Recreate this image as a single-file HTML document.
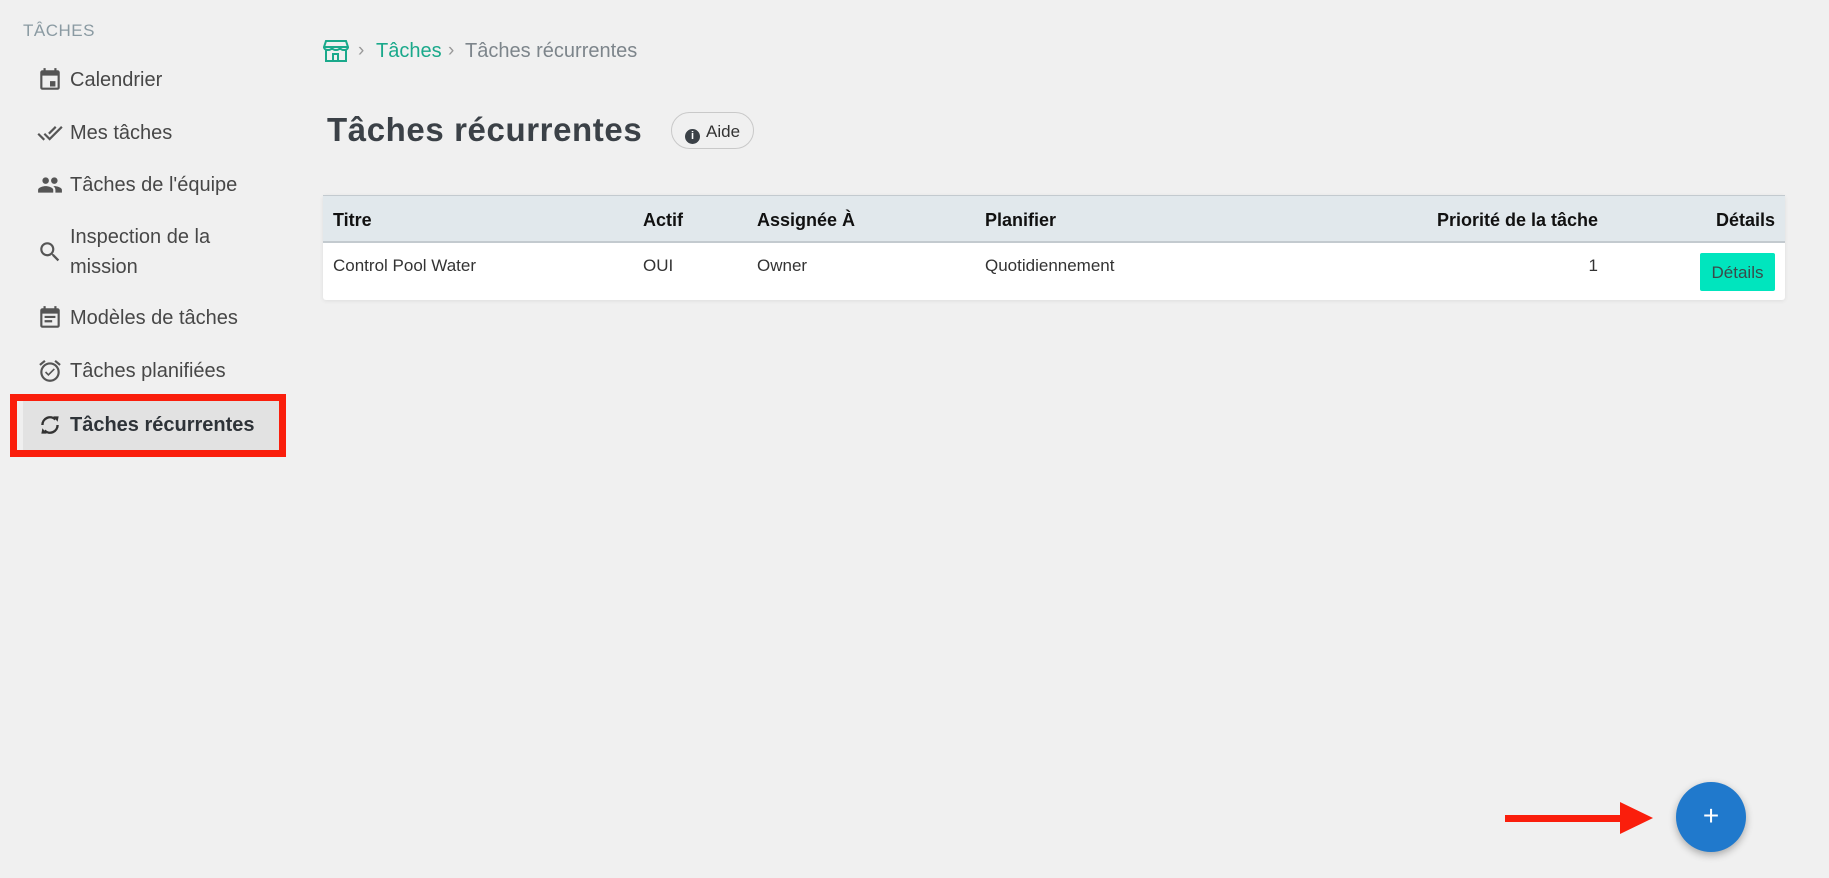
<!DOCTYPE html>
<html><head><meta charset="utf-8"><style>
*{box-sizing:border-box;margin:0;padding:0}
body{width:1829px;height:878px;background:#f0f0f0;font-family:"Liberation Sans",sans-serif;position:relative;overflow:hidden;color:#444}
.abs{position:absolute}
.sec{left:23px;top:21px;font-size:17px;color:#8a9aa2;letter-spacing:.5px}
.it{left:70px;font-size:20px;color:#474747;line-height:30px}
.ic{position:absolute;left:37px}
</style></head><body>
<div class="abs sec">TÂCHES</div>

<svg class="ic" style="top:67px" width="26" height="26" viewBox="0 0 24 24"><path fill="#555" d="M19 3h-1V1h-2v2H8V1H6v2H5c-1.1 0-2 .9-2 2v14c0 1.1.9 2 2 2h14c1.1 0 2-.9 2-2V5c0-1.1-.9-2-2-2zm0 16H5V8h14v11zM12 13h5v5h-5z"/></svg>
<div class="abs it" style="top:65px">Calendrier</div>

<svg class="ic" style="top:120px" width="26" height="26" viewBox="0 0 24 24"><path fill="#555" d="M18 7l-1.41-1.41-6.34 6.34 1.41 1.41L18 7zm4.24-1.41L11.66 16.17 7.48 12l-1.41 1.41L11.66 19l12-12-1.42-1.41zM.41 13.41L6 19l1.41-1.41L1.83 12 .41 13.41z"/></svg>
<div class="abs it" style="top:118px">Mes tâches</div>

<svg class="ic" style="top:172px" width="26" height="26" viewBox="0 0 24 24"><path fill="#555" d="M16 11c1.660 0 2.99-1.34 2.99-3S17.66 5 16 5c-1.66 0-3 1.34-3 3s1.34 3 3 3zm-8 0c1.66 0 2.99-1.34 2.99-3S9.66 5 8 5C6.34 5 5 6.34 5 8s1.34 3 3 3zm0 2c-2.33 0-7 1.17-7 3.5V19h14v-2.5c0-2.330-4.67-3.5-7-3.5zm8 0c-.29 0-.62.02-.97.05 1.16.84 1.970 1.97 1.97 3.45V19h6v-2.5c0-2.33-4.67-3.5-7-3.5z"/></svg>
<div class="abs it" style="top:170px">Tâches de l'équipe</div>

<svg class="ic" style="top:239px" width="26" height="26" viewBox="0 0 24 24"><path fill="#555" d="M15.5 14h-.79l-.28-.27A6.47 6.47 0 0016 9.5 6.5 6.5 0 109.5 16c1.61 0 3.09-.59 4.23-1.57l.27.28v.79l5 4.99L20.49 19l-4.99-5zm-6 0C7.01 14 5 11.99 5 9.5S7.01 5 9.5 5 14 7.01 14 9.5 11.99 14 9.5 14z"/></svg>
<div class="abs it" style="top:222px">Inspection de la<br>mission</div>

<svg class="ic" style="top:305px" width="26" height="26" viewBox="0 0 24 24"><path fill="#555" d="M19 3h-1V1h-2v2H8V1H6v2H5c-1.1 0-2 .9-2 2v14c0 1.1.9 2 2 2h14c1.1 0 2-.9 2-2V5c0-1.1-.9-2-2-2zm0 16H5V8h14v11zM7 10h10v2H7zm0 4h7v2H7z"/></svg>
<div class="abs it" style="top:303px">Modèles de tâches</div>

<svg class="ic" style="top:358px" width="26" height="26" viewBox="0 0 24 24"><path fill="#555" d="M10.54 14.53L8.41 12.4l-1.06 1.06 3.18 3.18 6-6-1.06-1.06-4.93 4.95zm6.797-12.72l4.607 3.845-1.28 1.535-4.61-3.843zm-10.674 0l1.282 1.536L3.337 7.19l-1.28-1.536zM12 4a9 9 0 10.001 18.001A9 9 0 0012 4zm0 16c-3.86 0-7-3.14-7-7s3.14-7 7-7 7 3.14 7 7-3.14 7-7 7z"/></svg>
<div class="abs it" style="top:356px">Tâches planifiées</div>

<div class="abs" style="left:10px;top:394px;width:276px;height:63px;border:7px solid #fa1e0c;background:#e2e2e2"><div style="width:6px;height:100%;background:#efefef"></div></div>
<svg class="ic" style="top:412px" width="26" height="26" viewBox="0 0 24 24"><path fill="none" stroke="#333" stroke-width="2.2" d="M5 12a7 7 0 0 1 12-5M19 12a7 7 0 0 1-12 5"/><path fill="#333" d="M15 4l5 0-1 5zM9 20l-5 0 1-5z"/></svg>
<div class="abs it" style="top:410px;font-weight:bold;color:#2e3338">Tâches récurrentes</div>

<svg class="abs" style="left:323px;top:39px" width="26" height="24" viewBox="0 0 26 24"><path fill="none" stroke="#1aa98b" stroke-width="2" d="M3 2h20l2 6H1zM1 8c0 2 2 3 4 3s4-1 4-3c0 2 2 3 4 3s4-1 4-3c0 2 2 3 4 3s4-1 4-3M3 11v11h20V11M10 22v-7h5v7"/></svg>
<div class="abs" style="left:358px;top:40px;font-size:19px;color:#999">›</div>
<div class="abs" style="left:376px;top:40px;font-size:20px;color:#1aa98b">Tâches</div>
<div class="abs" style="left:448px;top:40px;font-size:19px;color:#999">›</div>
<div class="abs" style="left:465px;top:40px;font-size:20px;color:#7d858b">Tâches récurrentes</div>

<div class="abs" style="left:327px;top:111px;font-size:33px;font-weight:bold;color:#3b4147;letter-spacing:.6px">Tâches récurrentes</div>
<div class="abs" style="left:671px;top:112px;width:83px;height:37px;border:1px solid #c9c9c9;border-radius:19px;font-size:17px;color:#333;padding:9px 0 0 13px"><span style="display:inline-block;width:15px;height:15px;border-radius:50%;background:#3b4147;color:#fff;font-size:11px;font-weight:bold;text-align:center;line-height:15px;vertical-align:-2px;margin-right:6px">i</span>Aide</div>

<div class="abs" style="left:323px;top:195px;width:1462px;height:105px;background:#fff;border-radius:3px;box-shadow:0 1px 4px rgba(0,0,0,.08)">
<div style="height:48px;background:#e1e8ec;border-top:1px solid #c3cacf;border-bottom:2px solid #c3cacf;position:relative;font-weight:bold;font-size:18px;color:#111">
<span class="abs" style="left:10px;top:14px">Titre</span>
<span class="abs" style="left:320px;top:14px">Actif</span>
<span class="abs" style="left:434px;top:14px">Assignée À</span>
<span class="abs" style="left:662px;top:14px">Planifier</span>
<span class="abs" style="right:187px;top:14px">Priorité de la tâche</span>
<span class="abs" style="right:10px;top:14px">Détails</span>
</div>
<div style="position:relative;font-size:17px;color:#333">
<span class="abs" style="left:10px;top:13px">Control Pool Water</span>
<span class="abs" style="left:320px;top:13px">OUI</span>
<span class="abs" style="left:434px;top:13px">Owner</span>
<span class="abs" style="left:662px;top:13px">Quotidiennement</span>
<span class="abs" style="right:187px;top:13px">1</span>
<span class="abs" style="right:10px;top:10px;width:75px;height:38px;background:#00e5be;border-radius:2px;text-align:center;line-height:40px;color:#3a4a4a">Détails</span>
</div>
</div>

<div class="abs" style="left:1505px;top:815px;width:120px;height:7px;background:#fa1e0c"></div>
<div class="abs" style="left:1620px;top:802px;width:0;height:0;border-top:16px solid transparent;border-bottom:16px solid transparent;border-left:33px solid #fa1e0c"></div>
<div class="abs" style="left:1676px;top:782px;width:70px;height:70px;border-radius:50%;background:#2079cc;box-shadow:0 3px 8px rgba(0,0,0,.3);color:#fff;font-size:28px;text-align:center;line-height:68px">+</div>
</body></html>
